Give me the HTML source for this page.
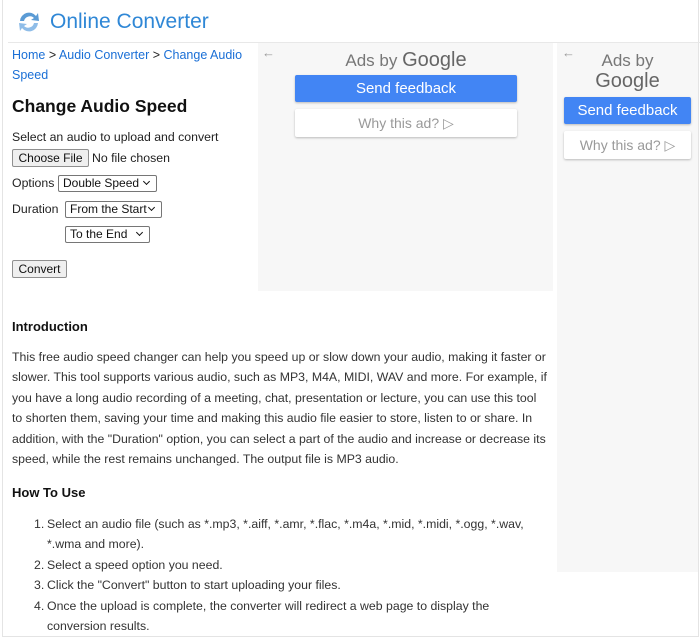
<!DOCTYPE html>
<html><head><meta charset="utf-8"><style>
*{margin:0;padding:0;box-sizing:border-box}
body{width:700px;height:638px;background:#fff;font-family:"Liberation Sans",Arial,sans-serif;color:#222;position:relative;overflow:hidden}
.frame{position:absolute;left:2px;top:0;width:697px;height:637px;border:1px solid #e4e4e4;border-top:none}
.abs{position:absolute}
a{color:#1a6fd6;text-decoration:none}
.btn{position:absolute;background:#efefef;border:1px solid #8f8f8f;border-radius:2px;font-size:12px;color:#111;text-align:center}
.sel{position:absolute;background:#fff;border:1px solid #767676;border-radius:2px;font-size:12px;color:#111;padding-left:4px;line-height:15px;white-space:nowrap;overflow:hidden}
.sel:after{content:"";position:absolute;right:7px;top:3px;width:4px;height:4px;border-right:1.6px solid #111;border-bottom:1.6px solid #111;transform:rotate(45deg);background:#fff}
.ad{background:#f7f7f7}
.blue{position:absolute;background:#4285f4;color:#fff;font-size:15px;text-align:center;border-radius:2px;box-shadow:0 1px 2px rgba(0,0,0,.25)}
.why{position:absolute;background:#fff;color:#999;font-size:14px;text-align:center;border-radius:2px;box-shadow:0 1px 2px rgba(0,0,0,.25)}
.ads{position:absolute;color:#777;font-size:17px;text-align:center}
.ads b{font-weight:normal;font-size:20px;color:#666}
p.t{position:absolute;left:12px;width:560px;font-size:12.3px;line-height:20.4px;color:#333;white-space:nowrap}
h3{position:absolute;left:12px;font-size:13px;color:#111}
ol{position:absolute;left:47px;width:490px;font-size:12.3px;line-height:20.4px;color:#333;list-style:none}
ol li{position:relative}
ol li span{position:absolute;left:-13px}
</style></head><body>
<div class="frame"></div>
<div class="abs" style="left:8px;top:42px;width:692px;height:1px;background:#e8e8e8"></div>
<svg class="abs" style="left:16px;top:9px" width="26" height="26" viewBox="0 0 26 26">
<path d="M4 12 A9 9 0 0 1 20 7 L22 4 L23 12 L15 11 L18 9 A6 6 0 0 0 8 12Z" fill="#5b9bd5"/>
<path d="M22 14 A9 9 0 0 1 6 19 L4 22 L3 14 L11 15 L8 17 A6 6 0 0 0 18 14Z" fill="#8fbde8"/>
</svg>
<div class="abs" style="left:50px;top:10px;font-size:21px;color:#2f87d6">Online Converter</div>
<div class="abs" style="left:12px;top:45px;width:240px;font-size:12.5px;line-height:20px"><a>Home</a> &gt; <a>Audio Converter</a> &gt; <a>Change Audio Speed</a></div>
<div class="abs" style="left:12px;top:96px;font-size:17.5px;font-weight:bold;color:#111">Change Audio Speed</div>
<div class="abs" style="left:12px;top:130px;font-size:12.3px">Select an audio to upload and convert</div>
<div class="btn" style="left:12px;top:149px;width:77px;height:18px;line-height:16px">Choose File</div>
<div class="abs" style="left:92px;top:151px;font-size:12.3px">No file chosen</div>
<div class="abs" style="left:12px;top:176px;font-size:12.3px">Options</div>
<div class="sel" style="left:58px;top:175px;width:99px;height:17px">Double Speed</div>
<div class="abs" style="left:12px;top:202px;font-size:12.3px">Duration</div>
<div class="sel" style="left:65px;top:201px;width:97px;height:17px">From the Start</div>
<div class="sel" style="left:65px;top:226px;width:85px;height:17px">To the End</div>
<div class="btn" style="left:12px;top:260px;width:55px;height:18px;line-height:16px">Convert</div>

<div class="abs ad" style="left:258px;top:43px;width:295px;height:248px"></div>
<div class="abs" style="left:262px;top:45px;font-size:13px;color:#999">&#8592;</div>
<div class="ads" style="left:295px;top:49px;width:222px">Ads by <b>Google</b></div>
<div class="blue" style="left:295px;top:75px;width:222px;height:27px;line-height:27px">Send feedback</div>
<div class="why" style="left:295px;top:109px;width:222px;height:28px;line-height:28px">Why this ad? &#9655;</div>

<div class="abs ad" style="left:557px;top:43px;width:141px;height:529px"></div>
<div class="abs" style="left:562px;top:45px;font-size:13px;color:#999">&#8592;</div>
<div class="ads" style="left:564px;top:50px;width:127px;line-height:21px">Ads by<br><b>Google</b></div>
<div class="blue" style="left:564px;top:97px;width:127px;height:27px;line-height:27px">Send feedback</div>
<div class="why" style="left:564px;top:131px;width:127px;height:28px;line-height:28px">Why this ad? &#9655;</div>

<h3 style="top:319px">Introduction</h3>
<p class="t" style="top:347px">This free audio speed changer can help you speed up or slow down your audio, making it faster or<br>slower. This tool supports various audio, such as MP3, M4A, MIDI, WAV and more. For example, if<br>you have a long audio recording of a meeting, chat, presentation or lecture, you can use this tool<br>to shorten them, saving your time and making this audio file easier to store, listen to or share. In<br>addition, with the "Duration" option, you can select a part of the audio and increase or decrease its<br>speed, while the rest remains unchanged. The output file is MP3 audio.</p>
<h3 style="top:485px">How To Use</h3>
<ol style="top:514px">
<li><span>1.</span>Select an audio file (such as *.mp3, *.aiff, *.amr, *.flac, *.m4a, *.mid, *.midi, *.ogg, *.wav, *.wma and more).</li>
<li><span>2.</span>Select a speed option you need.</li>
<li><span>3.</span>Click the "Convert" button to start uploading your files.</li>
<li><span>4.</span>Once the upload is complete, the converter will redirect a web page to display the conversion results.</li>
</ol>
</body></html>
